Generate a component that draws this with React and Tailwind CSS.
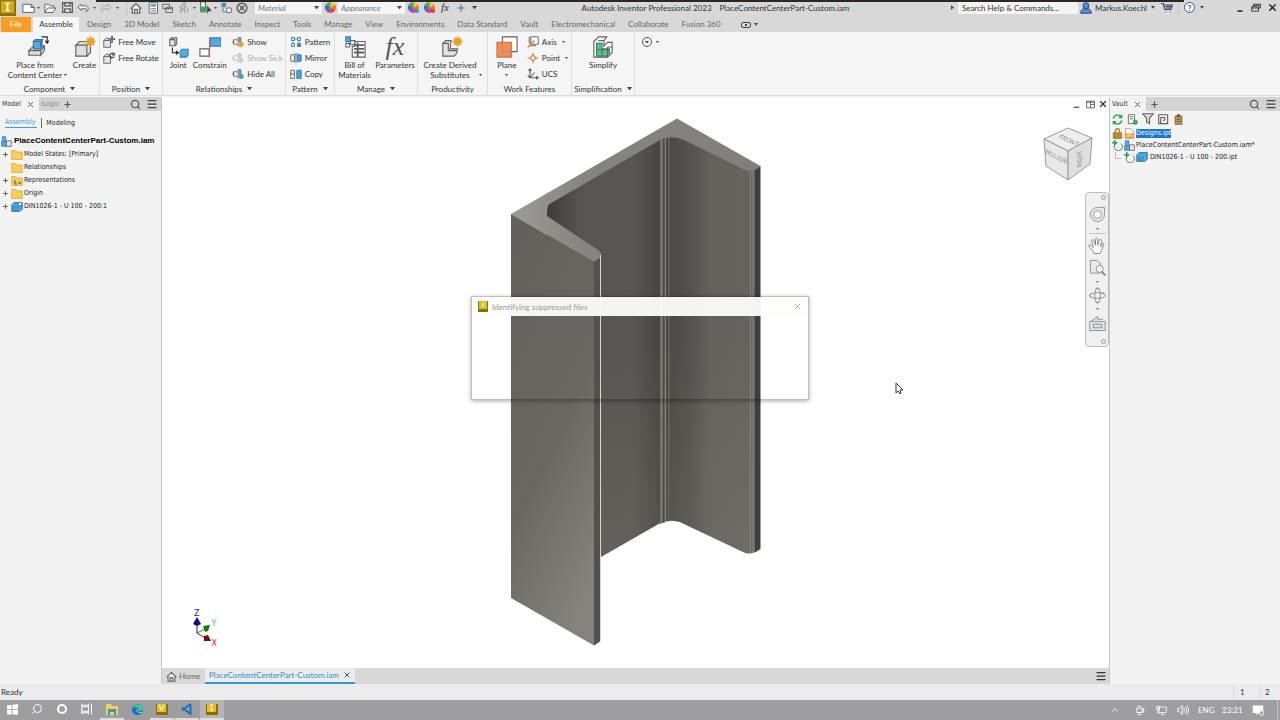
import { ChevronUp, Menu, Plus, Search, X } from "lucide-react";

const TABS = [
  "Design", "3D Model", "Sketch", "Annotate", "Inspect", "Tools", "Manage", "View", "Environments",
  "Data Standard", "Vault", "Electromechanical", "Collaborate", "Fusion 360",
];

function Caret({ className = "w-[5px]" }) {
  return (
    <svg viewBox="0 0 6 4" className={`shrink-0 ${className}`} fill="#444">
      <path d="M0 0h6L3 4z" />
    </svg>
  );
}

function Icon({ children, box = 16, className = "size-3" }) {
  return (
    <svg
      viewBox={`0 0 ${box} ${box}`}
      className={`shrink-0 ${className}`}
      fill="none"
      stroke="#606060"
      strokeWidth="1.2"
    >
      {children}
    </svg>
  );
}

function QuickButton({ label, children, className = "w-4" }) {
  return (
    <button type="button" aria-label={label} className={`flex h-4 shrink-0 items-center justify-center ${className}`}>
      {children}
    </button>
  );
}

function Wheel({ badge }) {
  return (
    <Icon className="size-[11px]">
      <g stroke="none">
        <path d="M8 8V0a8 8 0 0 1 7 4z" fill="#f6c52f" />
        <path d="M8 8l7-4a8 8 0 0 1 0 8z" fill="#ef7d28" />
        <path d="M8 8l7 4a8 8 0 0 1-7 4z" fill="#e2403a" />
        <path d="M8 8v8a8 8 0 0 1-7-4z" fill="#9a46b8" />
        <path d="M8 8l-7 4a8 8 0 0 1 0-8z" fill="#2f6fd6" />
        <path d="M8 8L1 4a8 8 0 0 1 7-4z" fill="#3cae53" />
        {badge && <circle cx="13" cy="13" r="3" fill={badge} />}
      </g>
    </Icon>
  );
}

function TitleSelect({ label }) {
  return (
    <label className="flex h-[13px] w-[67px] shrink-0 items-center bg-[#f6f6f6] pr-[3px]">
      <select aria-label={label} className="min-w-0 flex-1 appearance-none pl-[3px] text-[8px] leading-[12px] text-[#777] italic">
        <option>{label}</option>
      </select>
      <Caret />
    </label>
  );
}

function TitleBar() {
  return (
    <header className="flex h-[17px] shrink-0 items-center bg-[#d8d8d8] pb-[2px] text-[8px] text-[#333]">
      <div className="flex w-[126px] shrink-0 items-center">
        <svg viewBox="0 0 16 16" className="mr-1 size-4 shrink-0">
          <path d="M0 0h16v16H0z" fill="#8a7108" />
          <path d="M1 1h13v12H1z" fill="#d3ab17" />
          <path d="M5.500 3.500h4M7.500 3.500v7M5.500 10.500h4" stroke="#fff" strokeWidth="1.600" />
        </svg>
        <QuickButton label="New">
          <Icon className="size-[13px]"><path d="M1 4h10l4 4v6H1zM11 4v4h4" fill="#fff" /></Icon>
        </QuickButton>
        <Caret className="mx-[1px] w-[3px]" />
        <QuickButton label="Open" className="w-[18px]">
          <Icon><path d="M1 14V3h5l2 2h5v3M1 14l4-6h11l-4 6z" fill="#f5f5f5" /></Icon>
        </QuickButton>
        <QuickButton label="Save">
          <Icon className="size-[11px]"><path d="M1 1h14v14H1zM4 1v5h8V1M4 15v-5h8v5" strokeWidth="2" fill="#eee" /></Icon>
        </QuickButton>
        <QuickButton label="Undo">
          <Icon><path d="M6 3L1 7l5 4V9h5c2 0 3 2 1 4 4-1 4-8-1-8H6z" fill="#f0f0f0" /></Icon>
        </QuickButton>
        <Caret className="mx-[2px] w-[3px]" />
        <QuickButton label="Redo">
          <Icon className="size-3 opacity-40"><path d="M10 3l5 4-5 4V9H5c-2 0-3 2-1 4-4-1-4-8 1-8h5z" /></Icon>
        </QuickButton>
        <Caret className="mx-[2px] w-[3px]" />
      </div>
      <div className="flex w-[129px] shrink-0 items-center border-l border-[#c4c4c4]">
        <QuickButton label="Home" className="w-[18px]">
          <Icon><path d="M1 9l7-7 7 7M3 8v7h10V8M6 15v-5h4v5" strokeWidth="1.500" fill="#f2f2f2" /></Icon>
        </QuickButton>
        <QuickButton label="Sheet" className="w-[15px]">
          <Icon>
            <path d="M3 1h11v14H3z" fill="#fff" />
            <path d="M5 3h7v3H5z" fill="#3f93cf" stroke="none" />
            <path d="M5 9h7M5 12h7" />
          </Icon>
        </QuickButton>
        <QuickButton label="Windows">
          <Icon><path d="M1 3h9v6H1zM5 7h9v7H5z" fill="#ddd" /><path d="M5 9h9" /></Icon>
        </QuickButton>
        <QuickButton label="Update">
          <Icon className="size-3 opacity-60"><path d="M7 1L2 8h4l-3 6 8-8H7l3-5zM9 9v6M13 8v6" /></Icon>
        </QuickButton>
        <Caret className="mx-[1px] w-[3px]" />
        <QuickButton label="Select">
          <Icon className="size-[13px]">
            <path d="M2 1h6v12H2z" fill="#e6efe9" />
            <path d="M2 7h6v7H2z" fill="#3aa365" stroke="none" />
            <path d="M10 6l5 6h-3l-2 3z" fill="#333" />
          </Icon>
        </QuickButton>
        <Caret className="mx-[1px] w-[3px]" />
        <QuickButton label="Return">
          <Icon>
            <path d="M2 1h6v6H2z" fill="#3f93cf" stroke="none" />
            <path d="M4 8v5h4M9 8h6v6H9z" fill="#fff" />
          </Icon>
        </QuickButton>
        <QuickButton label="Material browser">
          <Icon><circle cx="8" cy="8" r="6.500" strokeWidth="2" /><circle cx="8" cy="8" r="2.500" /><path d="M3 3l10 10M13 3L3 13" /></Icon>
        </QuickButton>
      </div>
      <TitleSelect label="Material" />
      <span className="flex w-4 shrink-0 justify-center"><Wheel /></span>
      <TitleSelect label="Appearance" />
      <QuickButton label="Adjust"><Wheel badge="#3f93cf" /></QuickButton>
      <QuickButton label="Clear"><Wheel badge="#d9403a" /></QuickButton>
      <QuickButton label="Parameters">
        <i className="text-[11px] leading-none text-[#333] [font-family:'Liberation_Serif',serif]">fx</i>
      </QuickButton>
      <QuickButton label="Add"><Plus className="size-[10px] text-[#888]" strokeWidth={4} /></QuickButton>
      <Caret className="mx-[3px] w-[5px]" />
      <div className="flex min-w-0 flex-1 justify-center gap-2 whitespace-nowrap">
        <span>Autodesk Inventor Professional 2023</span>
        <span>PlaceContentCenterPart-Custom.iam</span>
      </div>
      <div className="flex shrink-0 items-center">
        <svg viewBox="0 0 4 6" className="mr-[4px] h-[5px] w-[3px]" fill="#444"><path d="M0 0l4 3-4 3z" /></svg>
        <input
          aria-label="Search"
          placeholder="Search Help & Commands..."
          className="h-[12px] w-[120px] bg-[#f3f3f3] pl-1 text-[8px] leading-[12px] placeholder:text-[#333]"
        />
        <Icon className="mx-[2px] size-3">
          <circle cx="8" cy="5" r="4" fill="#5c88d8" stroke="#23407c" />
          <path d="M1 15c0-5 3-6 5-6h4c2 0 5 1 5 6z" fill="#5c88d8" stroke="#23407c" />
        </Icon>
        <button type="button" className="w-[56px] pl-[1px] text-left whitespace-nowrap">Markus.Koechl</button>
        <Caret className="ml-[1px] w-[4px]" />
        <QuickButton label="Cart" className="w-[23px]">
          <Icon><path d="M0 2h3l2 8h8l2-6H4M6 13h1M12 13h1M6 6h8M6 8h7" strokeWidth="1.600" stroke="#3b4668" /></Icon>
        </QuickButton>
        <button type="button" className="flex h-3 w-[22px] items-center justify-center border-l border-[#c4c4c4]">
          <span className="flex size-[11px] items-center justify-center rounded-full border border-[#2c5aa0] bg-white text-[8px] leading-none font-bold text-[#2c5aa0]">?</span>
        </button>
        <Caret className="w-[4px]" />
        <div className="ml-[28px] flex items-center">
          <QuickButton label="Minimize"><Icon className="size-[10px]"><path d="M4 13h8" strokeWidth="2.500" stroke="#222" /></Icon></QuickButton>
          <QuickButton label="Restore"><Icon className="size-[10px]"><path d="M4 6V2h11v6h-3M1 6h11v7H1zM1 8h11M4 3.500h11" strokeWidth="1.500" stroke="#333" /></Icon></QuickButton>
          <QuickButton label="Close"><X className="size-[11px] text-[#222]" strokeWidth={3} /></QuickButton>
        </div>
      </div>
    </header>
  );
}

function RibbonTabs() {
  return (
    <nav className="flex h-[15px] shrink-0 items-stretch bg-[#d8d8d8] text-[8px] leading-[15px] whitespace-nowrap text-[#666]">
      <button type="button" className="ml-[1px] w-[30px] bg-[#fb9d21] text-white">File</button>
      <button type="button" className="ml-[2px] w-[46px] bg-[#f7f7f7] text-[#333]">Assemble</button>
      <div className="flex gap-[13px] pl-2">
        {TABS.map((tab) => (
          <button type="button" key={tab}>{tab}</button>
        ))}
      </div>
      <button type="button" aria-label="Ribbon display" className="ml-5 flex items-center gap-[3px]">
        <span className="flex h-[6px] w-[10px] items-center justify-center rounded-[2px] border border-[#444]">
          <span className="size-[2px] bg-[#444]" />
        </span>
        <Caret className="w-[4px]" />
      </button>
    </nav>
  );
}

function Group({ label, arrow = true, className, children }) {
  return (
    <section className={`flex shrink-0 flex-col border-r border-[#dedede] ${className}`}>
      <div className="flex flex-1 justify-center pt-[2px]">{children}</div>
      <div className="flex h-[13px] items-center justify-center gap-[5px] whitespace-nowrap">
        {label}
        {arrow && <Caret />}
      </div>
    </section>
  );
}

function Big({ lines, icon, arrow, className = "" }) {
  return (
    <button type="button" className={`flex flex-col items-center ${className}`}>
      <span className="flex h-[26px] items-center">{icon}</span>
      <span className="flex items-end gap-[2px] leading-[10px] whitespace-nowrap">
        <span>
          {lines.map((line) => (
            <span key={line} className="block">{line}</span>
          ))}
        </span>
        {arrow && <Caret className="mb-[4px] w-[3px]" />}
      </span>
    </button>
  );
}

function Small({ label, icon, arrow, disabled }) {
  return (
    <button type="button" disabled={disabled} className="flex h-4 items-center gap-[3px] whitespace-nowrap disabled:opacity-40">
      {icon}
      {label}
      {arrow && <Caret className="ml-[2px] w-[3px]" />}
    </button>
  );
}

function MoveIcon({ rotate }) {
  return (
    <Icon>
      <path d="M1 6l3-3h4v3M1 6h9v9H1zM10 10l3-3" fill="#e4e4e4" />
      {rotate ? (
        <path d="M14 2a3 3 0 1 0 1 4M15 1v3h-3" stroke="#333" strokeWidth="1.500" />
      ) : (
        <path d="M12 0v9M8 4h8M11 1l1-1 1 1M15 3l1 1-1 1" stroke="#333" strokeWidth="1.500" />
      )}
    </Icon>
  );
}

function RelIcon({ dot }) {
  return (
    <Icon>
      <path d="M7 5H2v6h5M0 8h3" />
      <path d="M8 1v13" stroke="#d9534f" />
      <path d="M9 2h3v6H9z" fill="#5aa9dc" stroke="#2f7fb8" strokeWidth=".8" />
      <circle cx="12" cy="11" r="3.500" fill={dot} stroke="none" />
    </Icon>
  );
}

function Ribbon() {
  return (
    <div className="flex h-16 shrink-0 border-b border-[#dcdcdc] bg-[#f5f5f5] text-[8px] text-[#333]">
      <Group label="Component" className="w-[100px]">
        <Big
          lines={["Place from", "Content Center"]}
          arrow
          className="ml-[4px] w-[66px] text-center"
          icon={
            <Icon box={24} className="size-[22px]">
              <path d="M2 16l5-5h12l-4 5zM2 16h13v5H2zM15 16l4-5v5l-4 5z" fill="#dcdcdc" />
              <path d="M7 6l2-2h8l-2 2zM7 6h8v8H7z" fill="#5aa9dc" stroke="#2d75ab" />
              <path d="M15 6l2-2v8l-2 2z" fill="#2d75ab" stroke="none" />
              <path d="M16 1h6v6M20 5l2 3 2-3" stroke="#222" />
            </Icon>
          }
        />
        <Big
          lines={["Create"]}
          className="w-[28px]"
          icon={
            <Icon box={24} className="size-[22px]">
              <path d="M2 10l4-4h12l-4 4zM2 10h12v12H2zM14 10l4-4v12l-4 4z" fill="#dedede" />
              <path d="M18 0l1 3 3-1-1 3 3 1-3 1 1 3-3-1-1 3-1-3-3 1 1-3-3-1 3-1-1-3 3 1z" fill="#f0a01e" stroke="#d98a10" strokeWidth=".5" />
            </Icon>
          }
        />
      </Group>
      <Group label="Position" className="w-[63px]">
        <div className="flex flex-col">
          <Small label="Free Move" icon={<MoveIcon />} />
          <Small label="Free Rotate" icon={<MoveIcon rotate />} />
        </div>
      </Group>
      <Group label="Relationships" className="w-[123px]">
        <Big
          lines={["Joint"]}
          className="w-[26px]"
          icon={
            <Icon box={24} className="size-[21px]">
              <path d="M2 3l2-2h6v7l-2 2H2z" fill="#e2e2e2" />
              <path d="M8 3v7M2 3h6" />
              <path d="M5 12v6h7M9 16l3 2-3 2" stroke="#222" />
              <path d="M14 16l2-2h7v7l-2 2h-7z" fill="#5aa9dc" stroke="#2f7fb8" />
            </Icon>
          }
        />
        <Big
          lines={["Constrain"]}
          className="w-[37px]"
          icon={
            <Icon box={24} className="size-[22px]">
              <path d="M12 2h12v9H12z" fill="#5aa9dc" stroke="#2f7fb8" />
              <path d="M1 14h10v8H1z" fill="#fff" />
              <path d="M11.500 2v21" stroke="#d9534f" />
            </Icon>
          }
        />
        <div className="ml-1 flex flex-col">
          <Small label="Show" icon={<RelIcon dot="#f0a01e" />} />
          <Small label="Show Sick" disabled icon={<RelIcon dot="#999" />} />
          <Small label="Hide All" icon={<RelIcon dot="#3aa6b0" />} />
        </div>
      </Group>
      <Group label="Pattern" className="w-[49px]">
        <div className="flex flex-col">
          <Small
            label="Pattern"
            icon={
              <Icon>
                <path d="M2 2h4v4H2zM10 2h4v4h-4zM2 10h4v4H2z" fill="#cfe5f4" stroke="#2f7fb8" />
                <path d="M10 10h4v4h-4z" fill="#4a9fd8" />
                <path d="M7 4h2M4 7v2M12 7v2" />
              </Icon>
            }
          />
          <Small
            label="Mirror"
            icon={
              <Icon>
                <path d="M1 4l5-1v10l-5-1z" fill="#eee" />
                <path d="M8 1v14" />
                <path d="M10 3l5 1v8l-5 1z" fill="#4a9fd8" stroke="#2f7fb8" />
              </Icon>
            }
          />
          <Small
            label="Copy"
            icon={
              <Icon>
                <path d="M1 3h5v11H1zM1 8h5" fill="#eee" />
                <path d="M9 3h6v11H9z" fill="#4a9fd8" stroke="#2f7fb8" />
              </Icon>
            }
          />
        </div>
      </Group>
      <Group label="Manage" className="w-[83px]">
        <Big
          lines={["Bill of", "Materials"]}
          className="w-[38px]"
          icon={
            <Icon box={24} className="size-[22px]">
              <path d="M2 1h5v5H2z" fill="#5aa9dc" stroke="#2f7fb8" />
              <path d="M2 8h4v4H2zM7 5h5v4H7z" fill="#fff" />
              <path d="M12 6h11v17H9V11h3z" fill="#fff" />
              <path d="M11 10h11M11 14h11M11 18h11M15 7v16" strokeWidth="2" />
            </Icon>
          }
        />
        <Big
          lines={["Parameters"]}
          className="w-[43px]"
          icon={<i className="text-[26px] leading-[20px] text-[#555] [font-family:'Liberation_Serif',serif]">fx</i>}
        />
      </Group>
      <Group label="Productivity" arrow={false} className="w-[70px]">
        <Big
          lines={["Create Derived", "Substitutes"]}
          arrow
          icon={
            <Icon box={24} className="size-[22px]">
              <path d="M2 8l3-3h6l-1 9h8l-1 5-3 3H2z" fill="#e2e2e2" />
              <path d="M2 8h6v8h9" />
              <path d="M18 0l1 3 3-1-1 3 3 1-3 1 1 3-3-1-1 3-1-3-3 1 1-3-3-1 3-1-1-3 3 1z" fill="#f0a01e" stroke="#d98a10" strokeWidth=".5" />
            </Icon>
          }
        />
      </Group>
      <Group label="Work Features" arrow={false} className="w-[84px]">
        <button type="button" className="flex w-[32px] flex-col items-center">
          <span className="flex h-[26px] items-center">
            <Icon box={24} className="size-[22px]">
              <path d="M7 1h16v16H7z" fill="#fff" />
              <path d="M1 7h16v16H1z" fill="#e8834f" stroke="#d97442" fillOpacity=".9" />
            </Icon>
          </span>
          <span className="leading-[10px]">Plane</span>
          <Caret className="mt-1 w-[3px]" />
        </button>
        <div className="ml-1 flex flex-col">
          <Small
            label="Axis"
            arrow
            icon={<Icon><path d="M5 1h10v10H5zM3 1v9M3 13h9" /><path d="M1 15L10 6" stroke="#e07b3c" strokeWidth="1.800" /></Icon>}
          />
          <Small
            label="Point"
            arrow
            icon={<Icon><path d="M8 1v14M1 8h14" stroke="#e07b3c" /><path d="M8 4l4 4-4 4-4-4z" fill="#fff" stroke="#e07b3c" strokeWidth="1.500" /></Icon>}
          />
          <Small label="UCS" icon={<Icon><path d="M4 13V2M2 4l2-3 2 3M4 13h10M12 11l3 2-3 2M4 13l6-7M1 10l3 3" strokeWidth="1.500" /></Icon>} />
        </div>
      </Group>
      <Group label="Simplification" className="w-[63px]">
        <Big
          lines={["Simplify"]}
          icon={
            <Icon box={24} className="size-[22px]">
              <path d="M2 6l5-5h9l-3 4v6l4-4h5v11l-5 5H2z" fill="#fff" />
              <path d="M5 8h6v6h8v4l-3 4H5z" fill="#5cc48a" stroke="#2c8c57" />
              <path d="M5 15h11M11 14v8M17 12h5M17 12v11M13 5H7" />
            </Icon>
          }
        />
      </Group>
      <button type="button" aria-label="More panels" className="ml-[7px] flex h-5 items-center gap-[4px]">
        <span className="flex size-[10px] items-center justify-center rounded-full border border-[#555]">
          <Caret className="w-[4px]" />
        </span>
        <Caret className="w-[3px]" />
      </button>
    </div>
  );
}

function PanelTabs({ name, second }) {
  return (
    <div className="flex h-[14px] shrink-0 items-center bg-[#d3d3d3] text-[7px] text-[#333]">
      <button type="button" className="flex h-full items-center gap-[5px] bg-[#f3f3f3] pr-[4px] pl-[2px]">
        {name}
        <X className="size-[9px] text-[#555]" strokeWidth={2.5} />
      </button>
      {second && <button type="button" className="pl-[2px] text-[#888]">{second}</button>}
      <button type="button" aria-label="Add tab" className="pl-[4px]"><Plus className="size-[9px] text-[#555]" strokeWidth={3} /></button>
      <button type="button" aria-label="Find" className="ml-auto"><Search className="size-[11px] text-[#555]" strokeWidth={2.5} /></button>
      <button type="button" aria-label="Menu" className="mr-[3px] ml-[5px]"><Menu className="size-[12px] text-[#444]" strokeWidth={2.5} /></button>
    </div>
  );
}

function Folder({ marked }) {
  return (
    <Icon className="mr-[1px] size-[12px]">
      <path d="M1 14V2h5l2 2h7v10z" fill="#f8cf5b" stroke="#dca52c" strokeWidth="1" />
      {marked && <path d="M5 7v5h3M5 9h2M10 9l3 3M13 9l-3 3" stroke="#555" />}
    </Icon>
  );
}

function AssemblyIcon() {
  return (
    <Icon className="size-[11px]">
      <path d="M2 1h5v7H2z" fill="#5aa9dc" stroke="#2f7fb8" />
      <path d="M1 8h7v7H1z" fill="#5aa9dc" stroke="#2f7fb8" />
      <path d="M8 7h7v8H8z" fill="#e8e8e8" />
    </Icon>
  );
}

function PartIcon({ pinned }) {
  return (
    <Icon className="mr-[1px] size-[12px]">
      <path d="M1 5l3-3h11v9l-3 3H1z" fill="#3f9ad8" stroke="#2f7fb8" />
      <path d="M12 14V5H1" stroke="#8cc6ee" strokeWidth=".8" />
      {pinned && <circle cx="12" cy="4" r="2.500" fill="#fff" stroke="#2f6f9f" />}
    </Icon>
  );
}

function TreeRow({ expandable = true, icon, children }) {
  return (
    <li className="flex h-[13px] items-center">
      <span className="flex w-[11px] shrink-0 justify-start pl-[2px]">
        {expandable && <Plus className="size-[7px] text-[#555]" strokeWidth={3} />}
      </span>
      {icon}
      {children}
    </li>
  );
}

function ModelPanel() {
  return (
    <aside className="flex w-[162px] shrink-0 flex-col border-r border-[#c8c8c8] bg-[#f3f3f3] text-[7px] text-[#222] [font-family:'DejaVu_Sans_Condensed','DejaVu_Sans',sans-serif]">
      <PanelTabs name="Model" second="iLogic" />
      <div className="flex h-[23px] items-center pl-[5px] leading-[10px]">
        <button type="button" className="border-b border-[#3a9fd6] pr-[2px] text-[#3a9fd6]">Assembly</button>
        <span className="mx-[4px] h-[10px] border-l border-[#666]" />
        <button type="button">Modeling</button>
      </div>
      <ul className="whitespace-nowrap">
        <li className="flex h-[14px] items-center gap-[2px] pl-[1px] text-[8px] font-bold text-black [font-family:'Liberation_Sans',sans-serif]">
          <AssemblyIcon />
          PlaceContentCenterPart-Custom.iam
        </li>
        <TreeRow icon={<Folder />}>Model States: [Primary]</TreeRow>
        <TreeRow icon={<Folder />} expandable={false}>Relationships</TreeRow>
        <TreeRow icon={<Folder marked />}>Representations</TreeRow>
        <TreeRow icon={<Folder />}>Origin</TreeRow>
        <TreeRow icon={<PartIcon pinned />}>DIN1026-1 - U 100 - 200:1</TreeRow>
      </ul>
    </aside>
  );
}

function Channel() {
  return (
    <svg viewBox="511 118 250 528" className="absolute top-[21px] left-1/2 h-[528px] w-[250px] -translate-x-1/2">
      <defs>
        <linearGradient id="top" x1="0" y1="0" x2="1" y2="0">
          <stop offset="0" stopColor="#9b9a96" />
          <stop offset=".3" stopColor="#85847f" />
          <stop offset="1" stopColor="#807f7b" />
        </linearGradient>
        <linearGradient id="front" x1=".2" y1="0" x2=".6" y2="1">
          <stop offset="0" stopColor="#62615d" />
          <stop offset=".55" stopColor="#686762" />
          <stop offset="1" stopColor="#83827d" />
        </linearGradient>
        <linearGradient id="web" gradientUnits="userSpaceOnUse" x1="547" y1="0" x2="662" y2="0">
          <stop offset="0" stopColor="#3e3d3a" />
          <stop offset=".3" stopColor="#565551" />
          <stop offset=".75" stopColor="#575652" />
          <stop offset="1" stopColor="#454440" />
        </linearGradient>
        <linearGradient id="flange" gradientUnits="userSpaceOnUse" x1="668" y1="0" x2="752" y2="0">
          <stop offset="0" stopColor="#4a4945" />
          <stop offset=".25" stopColor="#53524e" />
          <stop offset=".5" stopColor="#62615d" />
          <stop offset="1" stopColor="#65645f" />
        </linearGradient>
        <linearGradient id="lift" x1="0" y1="0" x2="0" y2="1">
          <stop offset=".4" stopColor="#8f8e88" stopOpacity="0" />
          <stop offset="1" stopColor="#8f8e88" stopOpacity=".2" />
        </linearGradient>
      </defs>
      <path d="M547 205L660 139L662 522L601 557L547 525z" fill="url(#web)" />
      <path d="M660 139Q672 134 684 139L744 169L755 170V552Q749 555 743 552L684 524Q677 520 667 521L660 524z" fill="url(#flange)" />
      <path d="M601 200H755V552Q749 555 743 552L684 524Q677 520 660 523L601 557z" fill="url(#lift)" />
      <path d="M755 169L760.500 166V549L755 552.500z" fill="#3f3e3a" />
      <path d="M662.500 138V523" stroke="#6e6d68" strokeWidth="4" />
      <path d="M661 138V523M665.500 137V522" stroke="#85847f" strokeWidth="1" />
      <path d="M663.500 138V522" stroke="#4a4945" strokeWidth="1" />
      <path d="M669 137V521" stroke="#605f5a" strokeWidth="2" />
      <path d="M750.500 170V553M753 170V553" stroke="#84837e" strokeWidth="1" />
      <path d="M511 214L677 118.500L760.500 166L755 170Q750 172 743 169L684 140Q671 134.500 660 140L549 204Q547 206 547 216L598 250Q603 254 600 258L594 262z" fill="url(#top)" />
      <path d="M511 214L594 262V645.500L511 598z" fill="url(#front)" />
      <path d="M594 262L600 258V641.500L594 645.500z" fill="#52514d" />
      <path d="M600.500 255V641" stroke="#d8d8d4" strokeWidth="1" />
    </svg>
  );
}

function ViewCube() {
  return (
    <svg viewBox="0 0 50 54" className="absolute top-[30px] right-[16px] h-[54px] w-[50px]" stroke="#9a9a9a">
      <path d="M1 12L25 1L49 11L25 24z" fill="#eeeeee" />
      <path d="M1 12L25 24V53L3 39z" fill="#e8e8e8" />
      <path d="M25 24L49 11L47 37L25 53z" fill="#dfdfdf" />
      <g fill="#888" stroke="none" fontSize="7" fontFamily="Liberation Sans, sans-serif" textAnchor="middle">
        <text transform="matrix(.76 .36 -.7 .7 24 15)">FRONT</text>
        <text transform="matrix(-.72 -.36 0 -1 13 27)">BOTTOM</text>
        <text transform="matrix(0 -.75 1 -.4 39 31)">RIGHT</text>
      </g>
    </svg>
  );
}

function NavBar() {
  return (
    <div className="absolute top-[95px] right-0 flex h-[155px] w-[24px] flex-col items-center rounded-[4px] border border-[#bdbdbd] bg-[#f0f0f0]">
      <span className="mt-[2px] mr-[2px] size-[5px] self-end rounded-full border border-[#999]" />
      <Icon box={24} className="mt-[6px] size-[17px] opacity-70">
        <path d="M2 12a10 10 0 0 1 10-10h10v10a10 10 0 0 1-20 0z" fill="#e2e2e2" />
        <circle cx="12" cy="12" r="5.500" fill="#fff" />
      </Icon>
      <Caret className="mt-[5px] w-[3px] opacity-70" />
      <span className="mt-[3px] w-[17px] border-t border-[#c4c4c4]" />
      <Icon box={24} className="mt-[3px] size-[18px] opacity-75">
        <path d="M8 22l-2-4-5-6c0-2 2-2 3-1l3 3-2-9c0-2 2-2 3 0l2 6V3c0-2 3-2 3 0v8l2-7c1-2 3-1 3 1l-1 8 2-4c1-1 3-1 2 1l-3 8-2 4z" fill="#fff" />
      </Icon>
      <Icon box={24} className="mt-[4px] size-[17px] opacity-75">
        <path d="M2 2h10l4 4v14H2z" fill="#e8e8e8" />
        <circle cx="15" cy="14" r="5" fill="#fff" />
        <path d="M18 18l5 5" strokeWidth="2.500" />
      </Icon>
      <Caret className="mt-[5px] w-[3px] opacity-70" />
      <Icon box={24} className="mt-[4px] size-[17px] opacity-75">
        <ellipse cx="12" cy="12" rx="11" ry="4" />
        <ellipse cx="12" cy="12" rx="4" ry="10" />
        <path d="M9 3l3-2 3 2M9 21l3 2 3-2M3 9l-2 3 2 3M19 7l3 3" />
      </Icon>
      <Caret className="mt-[4px] w-[3px] opacity-70" />
      <Icon box={24} className="mt-[5px] size-[17px] opacity-75">
        <path d="M1 9h22v13H1zM3 9l9-7v4h8" fill="#e2e2e2" />
        <path d="M6 13h12v5H6z" fill="#d2e0e8" />
      </Icon>
      <span className="mt-auto mr-[2px] mb-[2px] size-[5px] self-end rounded-full border border-[#999]" />
    </div>
  );
}

function Triad() {
  return (
    <svg viewBox="0 0 28 40" className="absolute bottom-[20px] left-[28px] h-[40px] w-[28px]" fontSize="8" fontFamily="DejaVu Sans, sans-serif">
      <path d="M7 25V14" stroke="#10107a" />
      <path d="M7 25l8-4" stroke="#1a9a1a" />
      <path d="M7 25l8 5" stroke="#a11" />
      <path d="M3 16l4-7 4 7-4 2z" fill="#0c0c80" />
      <path d="M13 18l7-1-2 6-3 1z" fill="#0b7a0b" />
      <path d="M14 28l4-1 3 6-7 0z" fill="#7c0a0a" />
      <text x="4" y="8" fill="#2222a8">Z</text>
      <text x="21.500" y="18" fill="#2ed12e">Y</text>
      <text x="21.500" y="38" fill="#e02020">X</text>
    </svg>
  );
}

function Viewport() {
  return (
    <main className="flex min-w-0 flex-1 flex-col bg-white">
      <div className="relative min-h-0 flex-1 overflow-hidden">
        <Channel />
        <div className="absolute top-[-1px] right-0 flex">
          <QuickButton label="Minimize document" className="w-[14px]"><Icon className="size-[9px]"><path d="M3 13h10" strokeWidth="2.500" /></Icon></QuickButton>
          <QuickButton label="Tile document" className="w-[14px]"><Icon className="size-[9px]"><path d="M1 2h14v12H1zM8 2v12M8 8h7M1 4h14" strokeWidth="1.600" /></Icon></QuickButton>
          <QuickButton label="Close document" className="w-[12px]"><X className="size-[10px] text-[#333]" strokeWidth={3} /></QuickButton>
        </div>
        <ViewCube />
        <NavBar />
        <Triad />
        <svg viewBox="0 0 8 13" className="absolute top-[285px] right-[206px] h-[13px] w-[8px]" fill="#fff" stroke="#333">
          <path d="M1 1v10l2-2 2 3 1-1-1-3h3z" />
        </svg>
      </div>
      <div className="flex h-4 shrink-0 items-stretch bg-[#d8d8d8] text-[8px]">
        <button type="button" className="flex w-[43px] items-center gap-[2px] pl-[4px] text-[#666]">
          <Icon className="size-[11px]"><path d="M1 9l7-7 7 7M3 8v7h10V8M6 15v-5h4v5" strokeWidth="1.500" fill="#f2f2f2" /></Icon>
          Home
        </button>
        <button type="button" className="flex items-center gap-[4px] border-b-2 border-[#2f9bd6] bg-[#ececec] px-[4px] whitespace-nowrap text-[#2f8fc6]">
          PlaceContentCenterPart-Custom.iam
          <X className="size-[8px] text-[#555]" strokeWidth={3} />
        </button>
        <button type="button" aria-label="Document list" className="mr-[2px] ml-auto"><Menu className="size-[12px] text-[#333]" strokeWidth={2.5} /></button>
      </div>
    </main>
  );
}

function CheckIn() {
  return (
    <Icon className="size-[11px]">
      <path d="M7 4a6 6 0 1 0 6 1" />
      <path d="M4 0v8M0 4h8" stroke="#2ba14e" strokeWidth="2.200" />
    </Icon>
  );
}

function VaultPanel() {
  return (
    <aside className="flex w-[171px] shrink-0 flex-col border-l border-[#c8c8c8] bg-[#f3f3f3] text-[7px] text-[#222] [font-family:'DejaVu_Sans_Condensed','DejaVu_Sans',sans-serif]">
      <PanelTabs name="Vault" />
      <div className="flex h-4 items-center gap-[4px] pl-[2px]">
        <button type="button" aria-label="Refresh">
          <Icon className="size-[11px]"><path d="M2 7a6 6 0 0 1 11-3M14 9a6 6 0 0 1-11 3M14 1v4h-4M2 15v-4h4" stroke="#25a244" strokeWidth="2" /></Icon>
        </button>
        <button type="button" aria-label="Check in">
          <Icon className="size-[11px]"><path d="M2 1h9v13H2zM4 4h5M4 7h5" fill="#fff" /><circle cx="12" cy="12" r="3" fill="#3ab56a" stroke="#1d8a46" /></Icon>
        </button>
        <button type="button" aria-label="Filter">
          <Icon><path d="M1 1h14l-5 6v7l-4-2V7z" fill="#ddd" strokeWidth="1.500" /></Icon>
        </button>
        <button type="button" aria-label="Find in vault">
          <Icon className="size-[11px]"><path d="M1 1h13v13H1zM4 14V5h6v4M7 9h3M14 8v7" strokeWidth="1.600" /></Icon>
        </button>
        <button type="button" aria-label="Properties">
          <Icon className="size-[11px]"><path d="M3 3h10v12H3z" fill="#b79a4c" stroke="#7d6524" /><path d="M6 1h4v3H6zM5 8h6M5 11h6" fill="#555" /></Icon>
        </button>
      </div>
      <ul className="whitespace-nowrap">
        <li className="flex h-3 items-center pl-[2px]">
          <Icon className="mr-[1px] size-[11px]">
            <path d="M5 7V4a3 3 0 0 1 6 0v3" stroke="#a8832a" strokeWidth="2" />
            <path d="M2 7h12v8H2z" fill="#b8912f" stroke="#8f6e1d" />
          </Icon>
          <Icon className="mr-[1px] size-[11px]">
            <path d="M2 1h8l4 4v10H2z" fill="#fff" stroke="#999" />
            <path d="M1 8h14v7H1z" fill="#f09a2c" stroke="none" />
            <path d="M4 10v3M7 13v-3h2v2M12 10v3" stroke="#fff" />
          </Icon>
          <span className="bg-[#1879cf] leading-[9px] text-white">Designs.ipt</span>
        </li>
        <li className="flex h-3 items-center gap-[1px] pl-[2px]">
          <CheckIn />
          <AssemblyIcon />
          PlaceContentCenterPart-Custom.iam*
        </li>
        <li className="flex h-3 items-center gap-[1px] pl-[5px]">
          <span className="mr-[2px] mb-[4px] h-[7px] w-[6px] border-b border-l border-[#bbb]" />
          <CheckIn />
          <PartIcon />
          DIN1026-1 - U 100 - 200.ipt
        </li>
      </ul>
    </aside>
  );
}

function Dialog() {
  return (
    <div role="dialog" className="absolute top-[296px] left-1/2 flex h-[104px] w-[338px] -translate-x-1/2 flex-col border border-black/25 shadow-[0_1px_4px_rgba(0,0,0,0.35)]">
      <div className="flex h-[19px] items-center bg-[#fdfdfb]/95 px-[6px] text-[8px] text-[#999]">
        <svg viewBox="0 0 10 11" className="mr-[4px] h-[11px] w-[10px]">
          <path d="M0 0h10v11H0z" fill="#7e7414" />
          <path d="M1 0h8v8H1z" fill="#d6c32a" />
          <path d="M5 2v4" stroke="#fff" />
        </svg>
        Identifying suppressed files
        <button type="button" aria-label="Close dialog" className="ml-auto"><X className="size-[9px]" strokeWidth={2} /></button>
      </div>
    </div>
  );
}

function Task({ label, open, active, children }) {
  return (
    <button
      type="button"
      aria-label={label}
      className={`mr-[1px] flex w-6 items-center justify-center border-b-2 ${active ? "bg-[#b5b5b7]" : ""} ${open ? "border-[#dedede]" : "border-transparent"}`}
    >
      {children}
    </button>
  );
}

function GoldApp({ vault }) {
  return (
    <svg viewBox="0 0 12 12" className="size-[12px]">
      <path d="M0 1h12v11H0z" fill="#8a6d0a" />
      <path d="M1 1h9v8H1z" fill="#e8bf1c" />
      <path d={vault ? "M3 2l2.500 5L8 2" : "M5.500 2v5M4 2h3M4 7h3"} fill="none" stroke="#fff" strokeWidth="1.200" />
    </svg>
  );
}

function Taskbar() {
  return (
    <footer className="flex h-5 shrink-0 items-stretch bg-[#9e9da1] text-[8px] text-white">
      <Task label="Start">
        <svg viewBox="0 0 12 12" className="size-[11px]" fill="#fff"><path d="M0 1.500l5-.7v5H0zM6 .7L12 0v5.800H6zM0 6.600h5v5l-5-.7zM6 6.600h6V12l-6-.7z" /></svg>
      </Task>
      <Task label="Search"><Search className="size-[12px] -scale-x-100" strokeWidth={2} /></Task>
      <Task label="Cortana"><span className="size-[10px] rounded-full border-2 border-white" /></Task>
      <Task label="Task view">
        <Icon><path d="M1 1v2h9V1M1 5h9v6H1zM1 15v-2h9v2M14 1v14M13 5h2" stroke="#fff" strokeWidth="1.400" /></Icon>
      </Task>
      <Task label="Explorer" open>
        <svg viewBox="0 0 12 11" className="h-[11px] w-[12px]">
          <path d="M0 0h5l1 2h6v9H0z" fill="#f5ce55" />
          <path d="M2 5h8v6H8V8H4v3H2z" fill="#3a93cc" />
        </svg>
      </Task>
      <Task label="Edge">
        <svg viewBox="0 0 12 12" className="size-[11px]">
          <circle cx="6" cy="6" r="6" fill="#1573c4" />
          <path d="M1 4c2-5 10-5 11 1 0 3-4 3-5 2 1-3-3-4-6-3z" fill="#45c98a" />
          <path d="M5 6c0 3 3 4 6 3" fill="none" stroke="#9fdcf2" />
        </svg>
      </Task>
      <Task label="Vault" open><GoldApp vault /></Task>
      <Task label="Code" open>
        <svg viewBox="0 0 12 12" className="size-[12px]" fill="none" stroke="#1473bd" strokeWidth="2"><path d="M9.500 1v10L1 4.500M9.500 1L1 7.500" /></svg>
      </Task>
      <Task label="Inventor" open active><GoldApp /></Task>
      <div className="ml-auto flex items-center">
        <ChevronUp className="mr-[15px] size-[10px]" />
        <Icon className="mr-[11px] size-[10px]"><path d="M3 5h8v7H3zM11 7l3-2v7l-3-2M4 2h6M4 15h6" stroke="#fff" strokeWidth="1.500" /></Icon>
        <Icon className="mr-[10px] size-[11px]"><path d="M4 3h11v8H4zM7 14h5M9 11v3M1 2h4v5H1zM3 7v6" stroke="#fff" /></Icon>
        <Icon className="mr-[9px] size-[12px]"><path d="M1 6h2l4-4v12l-4-4H1zM9 6q2 2 0 4M11 4q4 4 0 8M13 2q5 6 0 12" stroke="#fff" /></Icon>
        <span className="w-[24px]">ENG</span>
        <time className="w-[30px]">23:21</time>
        <Icon className="mr-[13px] size-[12px]"><path d="M1 2h14v10H9l-3 3v-3H1z" fill="#fff" stroke="none" /><circle cx="13" cy="12" r="3" fill="#9e9da1" stroke="#fff" /></Icon>
        <span className="h-5 w-[3px] border-l border-[#c4c4c6]" />
      </div>
    </footer>
  );
}

export default function App() {
  return (
    <div className="relative flex h-screen flex-col overflow-hidden bg-[#f3f3f3] [font-family:Lato,sans-serif]">
      <TitleBar />
      <div className="absolute top-0 right-24 left-24 h-[2px] bg-[#2b2725]" />
      <RibbonTabs />
      <Ribbon />
      <div className="flex min-h-0 flex-1 pt-[1px]">
        <ModelPanel />
        <Viewport />
        <VaultPanel />
      </div>
      <div className="flex h-4 shrink-0 items-center bg-[#ececec] text-[8px] text-[#333]">
        <span className="pl-[1px]">Ready</span>
        <span className="ml-auto flex h-full w-[27px] items-center border-l border-[#dcdcdc] pl-[6px]">1</span>
        <span className="flex h-full w-[20px] items-center border-l border-[#dcdcdc] pl-[4px]">2</span>
      </div>
      <Taskbar />
      <Dialog />
    </div>
  );
}
